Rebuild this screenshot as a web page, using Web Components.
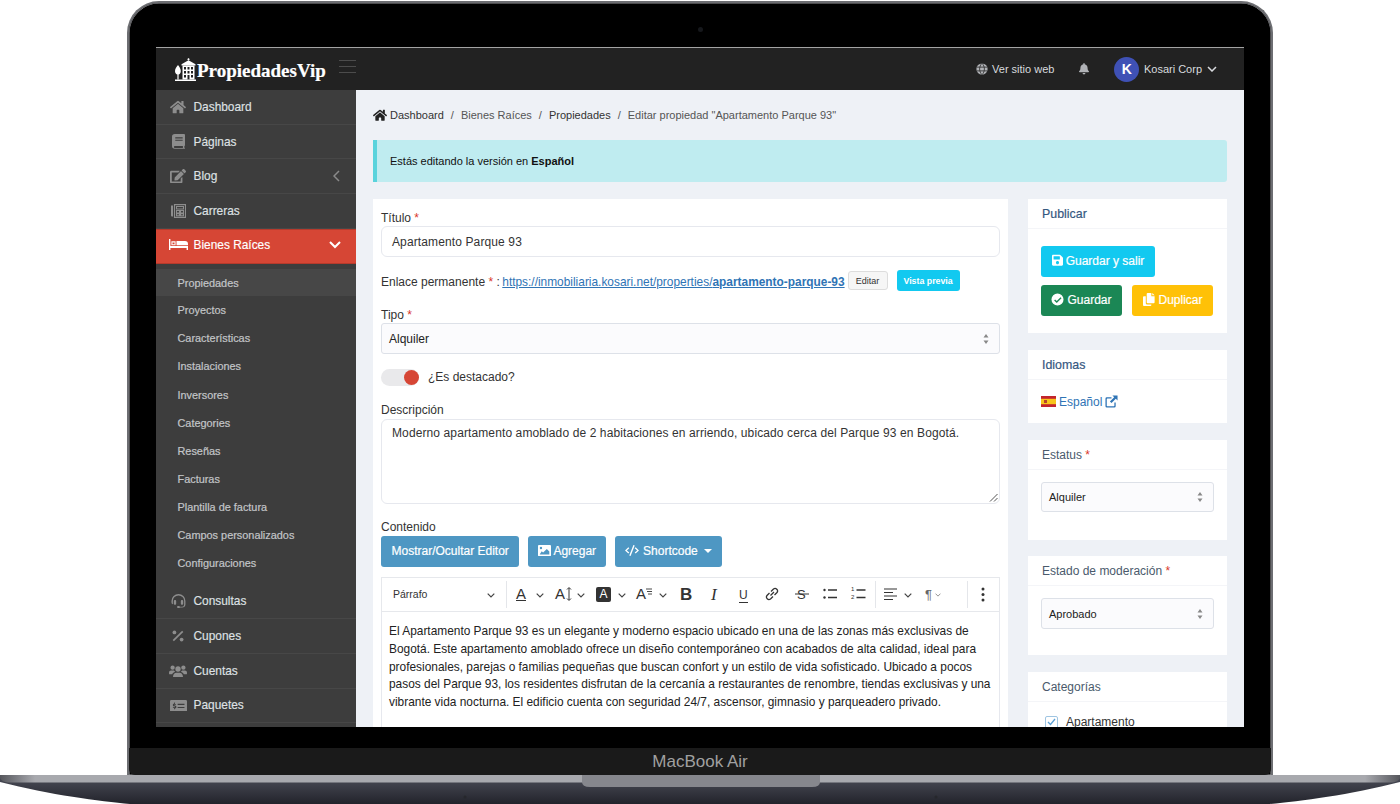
<!DOCTYPE html>
<html lang="es">
<head>
<meta charset="utf-8">
<title>Editar propiedad</title>
<style>
  html, body { margin: 0; padding: 0; background: #fff; overflow: hidden; }
  body { font-family: "Liberation Sans", Arial, sans-serif; }
</style>
</head>
<body>
<laptop-frame>
  <admin-header></admin-header>
  <div style="display:flex;height:637px;overflow:hidden">
    <side-nav></side-nav>
    <edit-page></edit-page>
  </div>
</laptop-frame>

<script>
const ICONS = {
  home: ['0 0 576 512', '<path d="M280.37 148.26L96 300.11V464a16 16 0 0 0 16 16l112.06-.29a16 16 0 0 0 15.92-16V368a16 16 0 0 1 16-16h64a16 16 0 0 1 16 16v95.64a16 16 0 0 0 16 16.05L464 480a16 16 0 0 0 16-16V300L295.67 148.26a12.19 12.19 0 0 0-15.3 0zM571.6 251.47L488 182.56V44.05a12 12 0 0 0-12-12h-56a12 12 0 0 0-12 12v72.61L318.47 43a48 48 0 0 0-61 0L4.34 251.47a12 12 0 0 0-1.6 16.9l25.5 31A12 12 0 0 0 45.15 301l235.22-193.74a12.19 12.19 0 0 1 15.3 0L530.9 301a12 12 0 0 0 16.9-1.6l25.5-31a12 12 0 0 0-1.7-16.93z"/>'],
  book: ['0 0 14 16', '<path fill-rule="evenodd" d="M3 0h10a1 1 0 0 1 1 1v11a1 1 0 0 1-.6.9c-.2.6-.2 1.400 0 2 .4.100.6.400.6.700a.5.5 0 0 1-.5.4H3a3 3 0 0 1-3-3V3a3 3 0 0 1 3-3zM3.500 3.600v1.200h8V3.600zM3.500 6.200v1.200h8V6.200zM3 13a1 1 0 0 0 0 2h8.800a6 6 0 0 1 0-2z"/>'],
  edit: ['0 0 576 512', '<path d="M402.6 83.2l90.2 90.2c3.800 3.800 3.800 10 0 13.800L274.400 405.600l-92.800 10.300c-12.400 1.400-22.900-9.100-21.500-21.500l10.300-92.800L388.800 83.200c3.800-3.800 10-3.800 13.800 0zm162-22.900l-48.800-48.800c-15.200-15.200-39.900-15.200-55.200 0l-35.400 35.400c-3.800 3.800-3.800 10 0 13.800l90.200 90.200c3.800 3.800 10 3.800 13.800 0l35.400-35.400c15.200-15.300 15.200-40 0-55.200zM384 346.200V448H64V128h229.800c3.200 0 6.200-1.300 8.500-3.500l40-40c7.600-7.600 2.200-20.500-8.500-20.500H48C21.500 64 0 85.500 0 112v352c0 26.500 21.500 48 48 48h352c26.500 0 48-21.500 48-48V306.200c0-10.700-12.900-16-20.500-8.500l-40 40c-2.200 2.300-3.500 5.300-3.500 8.500z"/>'],
  paper: ['0 0 15 14', '<path fill="none" stroke="currentColor" stroke-width="1.100" d="M3.500.6h11v12.800h-11zM5.500 2.500h7v2.500h-7zM5.500 6.500h3v2.500h-3zM9.500 6.500h3v2.500h-3zM5.500 9.700h3v2h-3zM9.500 9.700h3v2h-3z"/><path d="M0 1.500h2v11H1a1 1 0 0 1-1-1z"/>'],
  bed: ['0 0 19 11', '<path fill-rule="evenodd" d="M0 0h1.400v7H19v4h-1.400V9H1.400v2H0zM2.400 2.300h4.200v4H2.400zM3.500 3.400v1.800h2V3.400zM7.500 2h8.500a3 3 0 0 1 3 3v1.300H7.500z"/>'],
  headset: ['0 0 16 16', '<path d="M8 0a7.500 7.500 0 0 0-7.500 7.500v1.600a2 2 0 0 0 1.500 1.900V7.500a6 6 0 0 1 12 0V11.500a2 2 0 0 1-2 2H9.500a1 1 0 0 0-1-.7h-1a1 1 0 0 0 0 2.200h1a1 1 0 0 0 1-.7H12a3.500 3.500 0 0 0 3.400-3.200V7.500A7.500 7.500 0 0 0 8 0z"/><rect x="3" y="6.500" width="2.500" height="5" rx="1"/><rect x="10.500" y="6.500" width="2.500" height="5" rx="1"/>'],
  percent: ['0 0 14 14', '<circle cx="2.800" cy="2.800" r="2.200"/><circle cx="11.200" cy="11.200" r="2.200"/><path d="M11.800.8 13.200 2.200 2.200 13.200.8 11.800z"/>'],
  users: ['0 0 20 14', '<circle cx="4" cy="3" r="2.400"/><circle cx="16" cy="3" r="2.400"/><circle cx="10" cy="4.500" r="3"/><path d="M4.500 14v-1.300C4.500 10.200 6.500 8.500 8 8.500h4c1.500 0 3.500 1.700 3.500 4.200V14zM0 8.500C0 7 1 6 2.300 6h3.200c.4.600.9 1 1.500 1.400-1.800.4-3 1.600-3.500 3H1a1 1 0 0 1-1-1zM20 8.500C20 7 19 6 17.700 6h-3.200c-.4.600-.9 1-1.500 1.400 1.800.4 3 1.600 3.500 3H19a1 1 0 0 0 1-1z"/>'],
  money: ['0 0 20 14', '<path fill-rule="evenodd" d="M1.500 0h17A1.500 1.500 0 0 1 20 1.500v11a1.500 1.500 0 0 1-1.500 1.500h-17A1.500 1.500 0 0 1 0 12.500v-11A1.500 1.500 0 0 1 1.500 0zM9 4.500v1.300h8V4.500zM9 8.200v1.300h8V8.200zM5 3v1.100c-1 .1-1.700.8-1.700 1.700 0 1 .7 1.400 1.600 1.600 .7.200 1 .3 1 .6s-.3.500-.8.500c-.5 0-1-.2-1.400-.5l-.5.900c.4.300 1 .5 1.700.6V11h1V9.900c1-.2 1.600-.8 1.600-1.700 0-1-.7-1.400-1.600-1.600-.7-.2-1-.3-1-.6s.3-.4.700-.4c.4 0 .9.100 1.200.4l.5-.9c-.4-.3-.9-.4-1.400-.5V3z"/>'],
  globe: ['0 0 16 16', '<circle cx="8" cy="8" r="7.500"/><path fill="none" stroke="#222" stroke-width="1" d="M8 .5c-2 1.800-3.200 4.700-3.200 7.500S6 13.700 8 15.500c2-1.800 3.200-4.700 3.200-7.500S10 2.300 8 .5zM1 5.500h14M1 10.500h14"/>'],
  bell: ['0 0 448 512', '<path d="M224 512c35.320 0 63.970-28.650 63.970-64H160.030c0 35.350 28.650 64 63.970 64zm215.390-149.710c-19.320-20.760-55.470-51.990-55.470-154.290 0-77.700-54.480-139.900-127.940-155.160V32c0-17.670-14.320-32-31.980-32s-31.980 14.330-31.980 32v20.840C118.560 68.100 64.080 130.300 64.080 208c0 102.300-36.150 133.530-55.470 154.290-6 6.450-8.660 14.160-8.610 21.710.11 16.400 12.980 32 32.100 32h383.800c19.120 0 32-15.600 32.100-32 .05-7.550-2.610-15.270-8.610-21.710z"/>'],
  save: ['0 0 448 512', '<path d="M433.941 129.941l-83.882-83.882A48 48 0 0 0 316.118 32H48C21.490 32 0 53.490 0 80v352c0 26.510 21.490 48 48 48h352c26.510 0 48-21.490 48-48V163.882a48 48 0 0 0-14.059-33.941zM224 416c-35.346 0-64-28.654-64-64 0-35.346 28.654-64 64-64s64 28.654 64 64c0 35.346-28.654 64-64 64zm96-304.520V212c0 6.627-5.373 12-12 12H76c-6.627 0-12-5.373-12-12V108c0-6.627 5.373-12 12-12h228.520c3.183 0 6.235 1.264 8.485 3.515l3.480 3.480A11.996 11.996 0 0 1 320 111.480z"/>'],
  check: ['0 0 14 14', '<path fill-rule="evenodd" d="M7 .5a6.500 6.500 0 1 1 0 13 6.500 6.500 0 0 1 0-13zM10.300 4.700l-4.100 4-1.800-1.700-1 1 2.800 2.800 5.100-5.100z"/>'],
  copy: ['0 0 14 14', '<path d="M5 0h4v3.500h3.500V10a1 1 0 0 1-1 1H5a1 1 0 0 1-1-1V1a1 1 0 0 1 1-1zM10 0l2.500 2.500H10z"/><path d="M1 3.500h2V11a1.500 1.500 0 0 0 1.500 1.500H9v.5a1 1 0 0 1-1 1H1a1 1 0 0 1-1-1V4.500a1 1 0 0 1 1-1z"/>'],
  image: ['0 0 14 12', '<path fill-rule="evenodd" d="M1 0h12a1 1 0 0 1 1 1v10a1 1 0 0 1-1 1H1a1 1 0 0 1-1-1V1a1 1 0 0 1 1-1zM3.200 2a1.300 1.300 0 1 0 0 2.600 1.300 1.300 0 0 0 0-2.600zM1.800 10.200h10.400V7L9.500 4.200 5.500 8.200 4 6.800z"/>'],
  code: ['0 0 18 14', '<path d="M10.800 0l1.700.5-5.300 13.500-1.700-.5zM4.300 3l1.200 1.200L2.400 7l3.100 2.800L4.300 11 0 7zM13.700 3l-1.200 1.200L15.600 7l-3.100 2.800 1.200 1.200L18 7z"/>'],
  extern: ['0 0 14 14', '<path d="M2 2.500h5v1.400H2.400a.5.500 0 0 0-.5.500v7.200c0 .3.200.5.500.5h7.200c.3 0 .5-.2.500-.5V8h1.400v4a1.500 1.500 0 0 1-1.500 1.500H2A1.500 1.500 0 0 1 .5 12V4A1.500 1.500 0 0 1 2 2.500z"/><path d="M8 .5h5.500V6L11.600 4.100 7 8.700 5.300 7 9.900 2.400z"/>']
};

class UiIcon extends HTMLElement {
  connectedCallback() {
    const [box, body] = ICONS[this.getAttribute('name')];
    const w = this.getAttribute('w') || 14;
    this.attachShadow({mode: 'open'}).innerHTML = `
      <style>:host{display:inline-flex;align-items:center;justify-content:center;flex:none}
      svg{display:block;fill:currentColor}</style>
      <svg width="${w}" viewBox="${box}">${body}</svg>`;
  }
}
customElements.define('ui-icon', UiIcon);

class LaptopFrame extends HTMLElement {
  constructor() {
    super();
    this.attachShadow({mode: 'open'}).innerHTML = `
    <style>
      :host{display:flex;flex-direction:column;align-items:center;width:1400px;height:804px}
      .lid{box-sizing:border-box;width:1146px;height:774px;margin-top:1px;border:solid #6d6e72;border-width:2.500px 2.500px 0;
        border-radius:32px 32px 0 0;background:#000;display:flex;flex-direction:column;align-items:center;
        box-shadow:inset 0 0 0 .5px #9a9a9e}
      .cam{width:5px;height:5px;border-radius:50%;background:#16181c;margin-top:24px;margin-bottom:15px}
      .screen{width:1088px;height:679px;border-top:1px solid #a3a3a3;overflow:hidden;background:#eef1f6;flex:none}
      .gap{height:21px;flex:none}
      .chin{flex:1;align-self:stretch;background:#1a1a1a;display:flex;align-items:center;justify-content:center;
        color:#a0a0a0;font:17px "Liberation Sans",sans-serif;border-radius:0 0 6px 6px;padding-top:1px}
      .base{display:block;flex:none}
    </style>
    <div class="lid">
      <div class="cam"></div>
      <div class="screen"><slot></slot></div>
      <div class="gap"></div>
      <div class="chin">MacBook Air</div>
    </div>
    <svg class="base" width="1400" height="29" viewBox="0 0 1400 29">
      <defs>
        <linearGradient id="strip" x1="0" x2="1" y1="0" y2="0">
          <stop offset="0" stop-color="#55565c"/><stop offset=".025" stop-color="#a8a9ae"/>
          <stop offset=".975" stop-color="#a8a9ae"/><stop offset="1" stop-color="#55565c"/>
        </linearGradient>
        <linearGradient id="under" x1="0" x2="0" y1="0" y2="1">
          <stop offset="0" stop-color="#4d4f5a"/><stop offset="1" stop-color="#22232b"/>
        </linearGradient>
      </defs>
      <path d="M0 0H1400V7C1350 20 1300 26 1270 29H130C100 26 50 20 0 7Z" fill="url(#under)"/>
      <path d="M0 0H1400V3Q1398 7 1392 7.500H8Q2 7 0 3Z" fill="url(#strip)"/>
      <path d="M582 0H820V7Q820 12 812 12H590Q582 12 582 7Z" fill="#86878d"/>
      <circle cx="465" cy="22" r="1.500" fill="#26272c"/><circle cx="936" cy="22" r="1.500" fill="#26272c"/>
    </svg>`;
  }
}
customElements.define('laptop-frame', LaptopFrame);

class AdminHeader extends HTMLElement {
  constructor() {
    super();
    this.attachShadow({mode: 'open'}).innerHTML = `
    <style>
      :host{display:flex;align-items:center;height:42px;background:#222;color:#d8dade;font-family:"Liberation Sans",sans-serif;font-size:11px}
      .brand{display:flex;align-items:flex-end;gap:1px;margin-left:19px;width:164px;color:#fff}
      .brand b{font:bold 19px/20px "Liberation Serif",serif;-webkit-text-stroke:.2px #fff}
      .burger{width:17px;height:11px;border:solid #4c4c4c;border-width:1px 0;position:relative;margin-top:-6px}
      .burger::after{content:"";position:absolute;left:0;right:0;top:5px;height:1px;background:#4c4c4c}
      .right{margin-left:auto;display:flex;align-items:center;padding-right:27px}
      .web{display:flex;align-items:center;gap:4px}
      .web ui-icon,.bell{color:#b0b2b6}
      .bell{margin:0 25px 0 25px}
      .avatar{width:25px;height:25px;border-radius:50%;background:#3f51b5;color:#fff;display:flex;align-items:center;justify-content:center;font-size:14px;font-weight:bold;margin-right:4.500px}
      svg.ch{margin-left:5px}
    </style>
    <div class="brand">
      <svg width="21" height="23" viewBox="0 0 21 23" fill="#fff">
        <path d="M13.500 0l1.300 1.300-1.300 1.300-1.300-1.300z"/><path d="M13.500 2.300l7 4v1.200H6.500V6.300z"/>
        <path fill-rule="evenodd" d="M7.500 7.500h12V21.500h-12zM9 9v2.500h2V9zM12.500 9v2.500h2V9zM16 9v2.500h2V9zM9 13v2.500h2V13zM12.500 13v2.500h2V13zM16 13v2.500h2V13zM9 17v2.500h2V17zM12.500 17v4.500h2V17zM16 17v2.500h2V17z"/>
        <path d="M3 7c1.600 1.700 2.800 4 2.800 6.300 0 2-1.200 3-2.200 3.200v5H2.400v-5C1.300 16.300 0 15.300 0 13.300 0 11 1.400 8.700 3 7z"/>
        <rect x="0" y="21.500" width="21" height="1.500"/>
      </svg>
      <b>PropiedadesVip</b>
    </div>
    <div class="burger"></div>
    <div class="right">
      <span class="web"><ui-icon name="globe" w="12"></ui-icon>Ver sitio web</span>
      <ui-icon class="bell" name="bell" w="10"></ui-icon>
      <span class="avatar">K</span>
      <span>Kosari Corp</span>
      <svg class="ch" width="10" height="6" viewBox="0 0 10 6" fill="none" stroke="#d8dade" stroke-width="1.500"><path d="M1 1l4 4 4-4"/></svg>
    </div>`;
  }
}
customElements.define('admin-header', AdminHeader);

class NavItem extends HTMLElement {
  constructor() {
    super();
    const icon = this.getAttribute('icon');
    const w = this.getAttribute('w') || 15;
    const arrow = this.getAttribute('arrow');
    let mark = '';
    if (arrow === 'left') mark = '<svg class="mark" style="margin-right:16.500px" width="7" height="12" viewBox="0 0 7 12" fill="none" stroke="#8a8a8a" stroke-width="1.500"><path d="M6 1L1 6l5 5"/></svg>';
    if (arrow === 'down') mark = '<svg class="mark" width="12" height="8" viewBox="0 0 12 8" fill="none" stroke="#fff" stroke-width="2"><path d="M1 1l5 5 5-5"/></svg>';
    this.attachShadow({mode: 'open'}).innerHTML = `
    <style>
      :host{display:flex;align-items:center;box-sizing:border-box;height:34.700px;padding-left:6.500px;border-bottom:1px solid #474747;
        font-size:11.900px;color:#dfe1e4;-webkit-text-stroke:.15px}
      :host([active]){background:#d64635;color:#fff;border-bottom:0;height:35px;padding-bottom:3px;box-shadow:inset 0 1px 0 #b63a2c,inset 0 -1px 0 #b63a2c}
      .ic{width:31px;display:flex;justify-content:center;color:#8d8d8d;flex:none}
      :host([active]) .ic{color:#fff}
      .mark{margin-left:auto;margin-right:15px}
    </style>
    <span class="ic"><ui-icon name="${icon}" w="${w}"></ui-icon></span>
    <span class="t"><slot></slot></span>${mark}`;
  }
}
customElements.define('nav-item', NavItem);

class SubItem extends HTMLElement {
  constructor() {
    super();
    this.attachShadow({mode: 'open'}).innerHTML = `
    <style>
      :host{display:flex;align-items:center;height:28.100px;padding-left:21.500px;font-size:10.900px;color:#c3c5c8;-webkit-text-stroke:.2px}
      :host([current]){background:#474747;height:27px}
    </style><slot></slot>`;
  }
}
customElements.define('sub-item', SubItem);

class SideNav extends HTMLElement {
  constructor() {
    super();
    this.attachShadow({mode: 'open'}).innerHTML = `
    <style>
      :host{display:block;width:200px;flex:none;background:#3d3d3d;font-family:"Liberation Sans",sans-serif}
      .sub{padding:5.500px 0 7.400px}
    </style>
    <nav-item icon="home" w="16">Dashboard</nav-item>
    <nav-item icon="book" w="13">Páginas</nav-item>
    <nav-item icon="edit" w="16" arrow="left">Blog</nav-item>
    <nav-item icon="paper" w="15">Carreras</nav-item>
    <nav-item icon="bed" w="19" active arrow="down">Bienes Raíces</nav-item>
    <div class="sub">
      <sub-item current>Propiedades</sub-item>
      <sub-item>Proyectos</sub-item>
      <sub-item>Características</sub-item>
      <sub-item>Instalaciones</sub-item>
      <sub-item>Inversores</sub-item>
      <sub-item>Categories</sub-item>
      <sub-item>Reseñas</sub-item>
      <sub-item>Facturas</sub-item>
      <sub-item>Plantilla de factura</sub-item>
      <sub-item>Campos personalizados</sub-item>
      <sub-item>Configuraciones</sub-item>
    </div>
    <nav-item icon="headset" w="15">Consultas</nav-item>
    <nav-item icon="percent" w="12">Cupones</nav-item>
    <nav-item icon="users" w="18">Cuentas</nav-item>
    <nav-item icon="money" w="17">Paquetes</nav-item>`;
  }
}
customElements.define('side-nav', SideNav);

class MetaCard extends HTMLElement {
  constructor() {
    super();
    this.attachShadow({mode: 'open'}).innerHTML = `
    <style>
      :host{display:block;background:#fff;flex:none}
      .h{height:30px;box-sizing:border-box;padding:8px 0 0 14px;border-bottom:1.500px solid #f4f5f8;color:#36587f;font-size:12.400px;line-height:14px;-webkit-text-stroke:.2px}
      :host([plain]) .h{color:#4a5a6c;font-size:12px;-webkit-text-stroke:0}
      i{font-style:normal;color:#d9372a}
      .b{padding:var(--pad,17px 13px)}
    </style>
    <div class="h">${this.getAttribute('title')}${this.hasAttribute('req') ? ' <i>*</i>' : ''}</div>
    <div class="b"><slot></slot></div>`;
  }
}
customElements.define('meta-card', MetaCard);

class FakeButton extends HTMLElement {
  constructor() {
    super();
    this.attachShadow({mode: 'open'}).innerHTML = `
    <style>
      :host{display:inline-flex;align-items:center;justify-content:center;gap:3px;box-sizing:border-box;height:31px;padding-bottom:1.500px;border-radius:3px;
        background:var(--bg,#4e97c3);color:#fff;font-size:12px;padding-left:var(--px,10.500px);padding-right:var(--px,10.500px);white-space:nowrap;-webkit-text-stroke:.2px}
    </style><slot></slot>`;
  }
}
customElements.define('fake-button', FakeButton);

class FakeSelect extends HTMLElement {
  constructor() {
    super();
    this.attachShadow({mode: 'open'}).innerHTML = `
    <style>
      :host{display:flex;align-items:center;justify-content:space-between;box-sizing:border-box;height:var(--h,31px);padding:0 10px 0 7px;
        background:#fbfbfd;border:1px solid #dde1e8;border-radius:3px;color:#222;font-size:var(--fs,12px)}
      svg{display:block}
    </style>
    <slot></slot>
    <svg width="6" height="10" viewBox="0 0 6 10" fill="#888"><path d="M3 0l2.500 3.500h-5zM3 10L.5 6.500h5z"/></svg>`;
  }
}
customElements.define('fake-select', FakeSelect);

class EditorToolbar extends HTMLElement {
  constructor() {
    super();
    const ch = (x) => `<svg class="c" style="left:${x}px" width="8" height="5" viewBox="0 0 8 5" fill="none" stroke="#444" stroke-width="1.200"><path d="M.7.7 4 4 7.300.7"/></svg>`;
    const sep = (x) => `<i class="s" style="left:${x}px"></i>`;
    const at = (x, w, svg) => `<svg class="t" style="left:${x}px" width="${w}" height="16" viewBox="0 0 ${w} 16" fill="none" stroke="#333" stroke-width="1.300">${svg}</svg>`;
    const txt = (x, s, css = '') => `<span class="g" style="left:${x}px;${css}">${s}</span>`;
    this.attachShadow({mode: 'open'}).innerHTML = `
    <style>
      :host{display:block;position:relative;box-sizing:border-box;height:35px;border:1px solid #e6e8ec;background:#fff;font-family:"Liberation Sans",sans-serif;color:#333}
      .p{position:absolute;left:11px;top:10px;font-size:10.500px}
      .c{position:absolute;top:15px}
      .s{position:absolute;top:3px;width:1px;height:27px;background:#e4e6ea}
      .t{position:absolute;top:8px}
      .g{position:absolute;top:8px;line-height:16px;font-size:15px}
    </style>
    <span class="p">Párrafo</span>${ch(105)}${sep(124)}
    ${txt(134, '<span style="border-bottom:1.500px solid #333;line-height:12px;display:inline-block">A</span>')}${ch(154)}
    ${txt(173, 'A')}${at(184, 6, '<path d="M3 2v12M1 3.500 3 1.500l2 2M1 12.500l2 2 2-2" stroke-width="1"/>')}${ch(195)}
    ${txt(214, 'A', 'background:#333;color:#fff;width:15px;height:15px;line-height:15px;text-align:center;font-size:12px;border-radius:2px;top:9px')}${ch(236)}
    ${txt(254, 'A')}${at(264, 6, '<path d="M0 3h6M1 5.500h5M2 8h4" stroke-width=".9"/>')}${ch(277)}
    ${txt(298, '<b style="font-size:17px">B</b>', 'top:9px')}${txt(329, '<i style="font-family:\'Liberation Serif\',serif;font-size:17px">I</i>', 'top:9px')}
    ${txt(357, '<span style="font-size:12px;border-bottom:1.300px solid #333;line-height:13px;display:inline-block">U</span>')}
    ${at(383, 14, '<path d="M5.500 9.500 9 6M6 5.500 8.500 3a2.500 2.500 0 0 1 3.500 3.500L9.500 9M8 10.500 5.500 13A2.500 2.500 0 0 1 2 9.500L4.500 7"/>')}
    ${txt(415, '<span style="font-size:13px">S</span>')}${at(413, 14, '<path d="M0 8h14" stroke-width="1"/>')}
    ${at(441, 14, '<circle cx="1.500" cy="4" r="1.200" fill="#333" stroke="none"/><circle cx="1.500" cy="11.500" r="1.200" fill="#333" stroke="none"/><path d="M5 4h9M5 11.500h9"/>')}
    ${at(469, 15, '<path d="M5.500 4h9M5.500 11.500h9"/>')}
    <span class="g" style="left:469px;top:7px;font-size:6px;line-height:8px">1<br>2</span>
    ${sep(493)}
    ${at(502, 13, '<path d="M0 3h13M0 6.500h9M0 10h13M0 13.500h9" stroke-width="1.100"/>')}${ch(522)}
    ${txt(543, '<span style="font-size:13px;color:#666">¶</span>')}
    <svg class="c" style="left:553px" width="6" height="4" viewBox="0 0 8 5" fill="none" stroke="#888" stroke-width="1.200"><path d="M.7.7 4 4 7.300.7"/></svg>
    ${sep(585)}
    <svg class="t" style="left:599px" width="4" height="16" viewBox="0 0 4 16" fill="#333"><circle cx="2" cy="3" r="1.500"/><circle cx="2" cy="8.500" r="1.500"/><circle cx="2" cy="14" r="1.500"/></svg>`;
  }
}
customElements.define('editor-toolbar', EditorToolbar);

class EditPage extends HTMLElement {
  constructor() {
    super();
    this.attachShadow({mode: 'open'}).innerHTML = `
    <style>
      :host{display:block;flex:1;min-width:0;background:#eef1f6;padding:0 17px;font-family:"Liberation Sans",sans-serif;font-size:12px;color:#333;overflow:hidden}
      .crumb{display:flex;align-items:center;height:16px;margin-top:17px;font-size:11px;color:#555;gap:7px}
      .crumb a{color:#333}
      .alert{height:42px;margin-top:17px;box-sizing:border-box;border-left:4px solid #5ad3dc;background:#bfecf0;border-radius:0 3px 3px 0;
        padding-left:13px;display:flex;align-items:center;font-size:11px;color:#111;gap:3px}
      .cols{display:flex;gap:20px;margin-top:17px;align-items:flex-start}
      .main{width:635px;flex:none;background:#fff;box-sizing:border-box;padding:11px 8px 0;height:600px}
      .side{width:199px;flex:none;display:flex;flex-direction:column;gap:16px}
      label{display:block;line-height:14px;margin-bottom:2px}
      label.low{box-sizing:border-box;height:15px;padding-top:1px;margin-bottom:1px}
      label i,.link i{font-style:normal;color:#d9372a}
      .input{box-sizing:border-box;height:31px;border:1px solid #e6e8ee;border-radius:6px;padding:0 10px;display:flex;align-items:center;letter-spacing:.12px}
      .link{display:flex;align-items:center;box-sizing:border-box;height:20px;padding-top:2px;margin:14px 0 16px}
      .link a{color:#2f74b5;text-decoration:underline;margin-left:2.500px;font-size:11.900px}
      .edit{margin:0 0 3px 3px;height:19px;width:40px;box-sizing:border-box;border:1px solid #ddd;border-radius:3px;background:#f6f6f6;font-size:9px;display:flex;align-items:center;justify-content:center}
      .preview{margin:0 0 3px 9px;height:21px;width:63px;border-radius:3px;background:#12c9f0;color:#fff;font-size:8.800px;font-weight:bold;display:flex;align-items:center;justify-content:center}
      .toggle{display:flex;align-items:center;gap:9px;margin:14px 0 17px;height:18px}
      .track{width:38px;height:17px;border-radius:9px;background:#e9e9eb;display:flex;justify-content:flex-end;align-items:center}
      .track b{display:block;width:15px;height:15px;border-radius:50%;background:#d64635;margin-right:.5px}
      .area{position:relative;box-sizing:border-box;height:85px;border:1px solid #e6e8ee;border-radius:6px;padding:6px 10px;line-height:14px;letter-spacing:.11px}
      .area svg{position:absolute;right:1px;bottom:1px}
      .btns{display:flex;gap:9px;margin-bottom:10px}
      .txt{border:1px solid #e6e8ee;border-top:0;height:130px;padding:11px 7px;font-size:11.900px;line-height:17.800px;color:#222;white-space:nowrap}
      .gb{display:flex;flex-wrap:wrap;gap:8px 10px}
      .lang{display:flex;align-items:center;color:#2f74b5;font-size:12px}
      .check{display:flex;align-items:center;gap:8px;color:#333}
      .box{width:13px;height:13px;box-sizing:border-box;border:1px solid #9fc5e2;border-radius:2px;display:flex;align-items:center;justify-content:center}
    </style>
    <div class="crumb">
      <ui-icon name="home" w="14" style="color:#222;margin-right:-4px"></ui-icon>
      <a>Dashboard</a><span>/</span><span>Bienes Raíces</span><span>/</span><a>Propiedades</a><span>/</span><span>Editar propiedad "Apartamento Parque 93"</span>
    </div>
    <div class="alert">Estás editando la versión en <b>Español</b></div>
    <div class="cols">
      <div class="main">
        <label class="low">Título <i>*</i></label>
        <div class="input">Apartamento Parque 93</div>
        <div class="link">Enlace permanente <i>&nbsp;*</i>&nbsp;:
          <a>https://inmobiliaria.kosari.net/properties/<b>apartamento-parque-93</b></a>
          <span class="edit">Editar</span><span class="preview">Vista previa</span>
        </div>
        <label class="low">Tipo <i>*</i></label>
        <fake-select>Alquiler</fake-select>
        <div class="toggle"><span class="track"><b></b></span>¿Es destacado?</div>
        <label>Descripción</label>
        <div class="area">Moderno apartamento amoblado de 2 habitaciones en arriendo, ubicado cerca del Parque 93 en Bogotá.
          <svg width="9" height="9" viewBox="0 0 9 9" stroke="#555" stroke-width="1"><path d="M8.500 1 1 8.500M8.500 5 5 8.500"/></svg>
        </div>
        <label style="margin-top:16px">Contenido</label>
        <div class="btns">
          <fake-button>Mostrar/Ocultar Editor</fake-button>
          <fake-button style="--px:10px;gap:2px"><ui-icon name="image" w="13"></ui-icon>Agregar</fake-button>
          <fake-button style="--px:10px;gap:4px"><ui-icon name="code" w="14"></ui-icon>Shortcode
            <svg width="8" height="4" viewBox="0 0 8 4" fill="#fff" style="margin-left:2.500px"><path d="M0 0h8L4 4z"/></svg></fake-button>
        </div>
        <editor-toolbar></editor-toolbar>
        <div class="txt">El Apartamento Parque 93 es un elegante y moderno espacio ubicado en una de las zonas más exclusivas de<br>Bogotá. Este apartamento amoblado ofrece un diseño contemporáneo con acabados de alta calidad, ideal para<br>profesionales, parejas o familias pequeñas que buscan confort y un estilo de vida sofisticado. Ubicado a pocos<br>pasos del Parque 93, los residentes disfrutan de la cercanía a restaurantes de renombre, tiendas exclusivas y una<br>vibrante vida nocturna. El edificio cuenta con seguridad 24/7, ascensor, gimnasio y parqueadero privado.</div>
      </div>
      <div class="side">
        <meta-card title="Publicar" style="margin-bottom:.5px">
          <div class="gb">
            <fake-button style="--bg:#12c9f0;width:114px"><ui-icon name="save" w="11"></ui-icon>Guardar y salir</fake-button>
            <div style="display:flex;gap:10px">
              <fake-button style="--bg:#1b8755;width:81px"><ui-icon name="check" w="13"></ui-icon>Guardar</fake-button>
              <fake-button style="--bg:#ffc107;width:81px"><ui-icon name="copy" w="13"></ui-icon>Duplicar</fake-button>
            </div>
          </div>
        </meta-card>
        <meta-card title="Idiomas" style="--pad:15px 13px 14px;margin-bottom:1.500px">
          <div class="lang">
            <svg width="15" height="11" viewBox="0 0 15 11" style="margin-right:3px"><rect width="15" height="11" fill="#c3242c"/><rect y="2.800" width="15" height="5.400" fill="#f8c51c"/><rect x="3" y="4" width="3" height="3" fill="#b5442c"/></svg>
            Español<ui-icon name="extern" w="13" style="margin-left:3px"></ui-icon>
          </div>
        </meta-card>
        <meta-card plain title="Estatus" req style="--pad:12px 13px 28px">
          <fake-select style="--h:30px;--fs:11px">Alquiler</fake-select>
        </meta-card>
        <meta-card plain title="Estado de moderación" req style="--pad:12px 13px 26px;margin-bottom:1px">
          <fake-select style="--h:31px;--fs:11px">Aprobado</fake-select>
        </meta-card>
        <meta-card plain title="Categorías" style="--pad:13px 17px 20px">
          <div class="check"><span class="box"><svg width="9" height="8" viewBox="0 0 9 8" fill="none" stroke="#5a9fd4" stroke-width="1.300"><path d="M1 4l2.500 2.500L8 1"/></svg></span>Apartamento</div>
        </meta-card>
      </div>
    </div>`;
  }
}
customElements.define('edit-page', EditPage);
</script>
</body>
</html>
